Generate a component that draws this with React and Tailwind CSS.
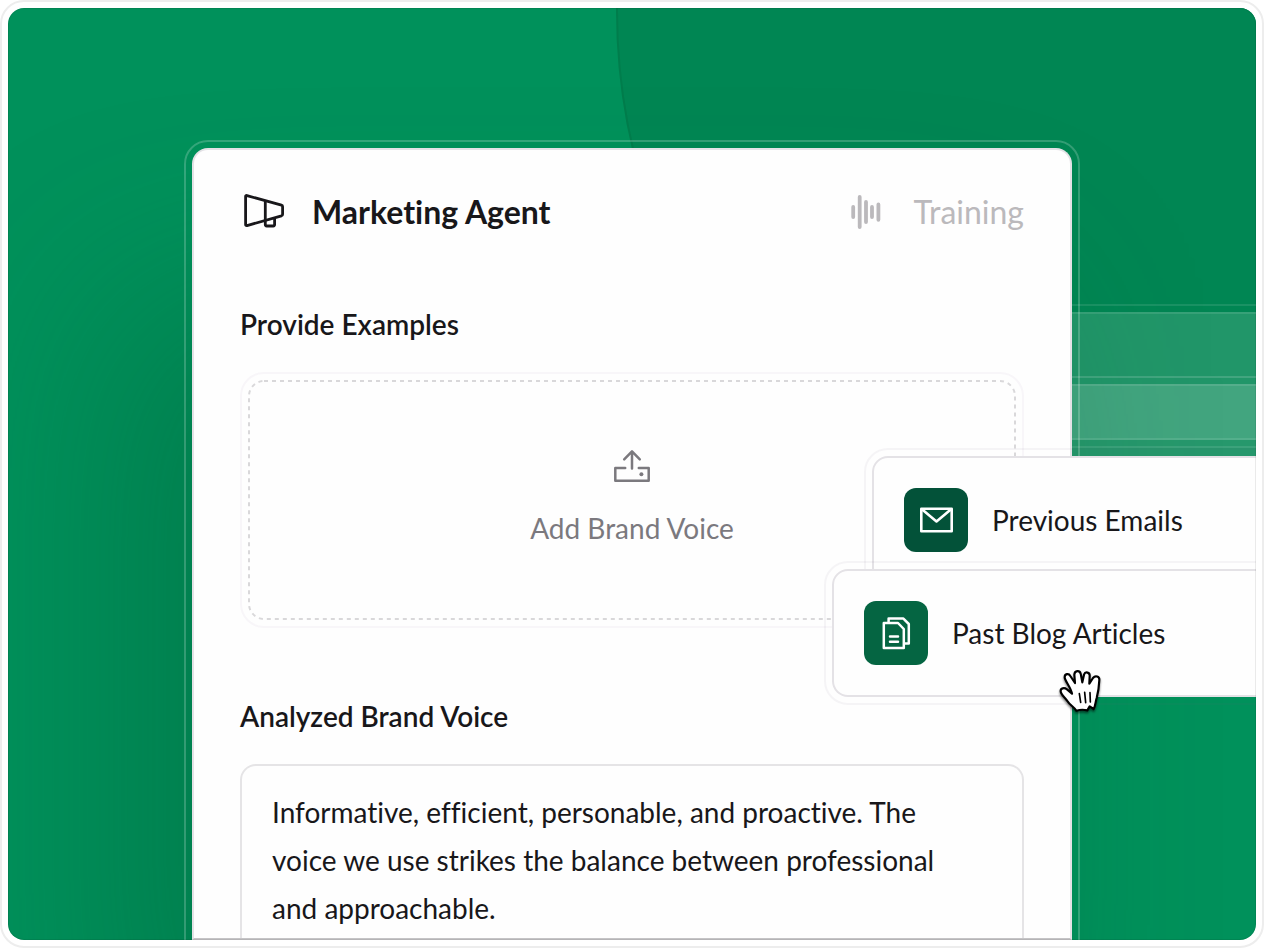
import { useState } from 'react';

const fuentes = [
  { id: 'emails', label: 'Previous Emails', position: 'left-[680px] top-[448px]', color: 'bg-[#035239]', Icon: MailIcon },
  { id: 'articles', label: 'Past Blog Articles', position: 'left-[640px] top-[561px]', color: 'bg-[#056542]', Icon: DocumentsIcon },
];

function MegaphoneIcon() {
  return (
    <svg className="size-12 shrink-0" viewBox="0 0 48 48" fill="none" stroke="currentColor" strokeWidth="2.8" strokeLinejoin="round" aria-hidden="true">
      <path d="M7 7.6 L41.5 17.2 Q42.6 17.5 42.6 18.7 V26.3 Q42.6 27.4 41.5 27.8 L7 37.6 Q5.6 37.9 5.6 36.5 V8.6 Q5.6 7.2 7 7.6 Z" />
      <path d="M25.3 13 V36.6 Q25.3 38 26.7 38 H33.2 Q34.6 38 34.6 36.6 V29.8" />
    </svg>
  );
}

function WaveIcon() {
  return (
    <svg className="h-9 w-8 shrink-0" viewBox="0 0 32 36" stroke="currentColor" strokeWidth="3.8" strokeLinecap="round" aria-hidden="true">
      <path d="M3.2 13 V23 M9.7 3 V33 M16 8 V28 M22 13 V23 M28.4 10.4 V25.8" />
    </svg>
  );
}

function UploadIcon() {
  return (
    <svg className="size-10" viewBox="0 0 40 40" fill="none" stroke="currentColor" strokeWidth="2.5" strokeLinecap="round" strokeLinejoin="round" aria-hidden="true">
      <path d="M13.2 22 H3.3 V34.8 H36.7 V22 H26.8" />
      <path d="M20 22.4 V5.4 M12.2 13.4 L20 5.4 L27.8 13.4" />
      <circle cx="29.4" cy="28.2" r="2" fill="currentColor" stroke="none" />
    </svg>
  );
}

function MailIcon() {
  return (
    <svg className="size-16" viewBox="0 0 64 64" fill="none" stroke="currentColor" strokeWidth="2.6" strokeLinejoin="round" aria-hidden="true">
      <rect x="17.3" y="20.7" width="30.4" height="22.6" />
      <path d="M17.6 21 L32.5 33.4 L47.4 21" />
    </svg>
  );
}

function DocumentsIcon() {
  return (
    <svg className="size-16" viewBox="0 0 64 64" fill="none" stroke="currentColor" strokeWidth="2.5" strokeLinecap="round" strokeLinejoin="round" aria-hidden="true">
      <path d="M19.8 22 H34 L39.8 28 V47 H19.8 Z" />
      <path d="M24.6 21.4 V17.6 H39.4 L44.8 23 V42.4 H41" />
      <path d="M26 35.6 H34 M26 40.8 H34" />
    </svg>
  );
}

function HandCursor() {
  return (
    <svg
      className="pointer-events-none absolute left-[865px] top-[659px] z-30 size-12 drop-shadow-[0_2px_1px_rgba(0,0,0,0.5)]"
      viewBox="50 50 144 144"
      fill="white"
      stroke="black"
      strokeWidth="6.5"
      strokeLinecap="round"
      strokeLinejoin="round"
      aria-hidden="true"
    >
      <path d="M108 181 C102 170 88 164 81 152 C75 142 62 134 61 123 C60 113 72 111 80 117 L95 130 C92 112 74 92 73 81 C73 70 85 68 90 77 L104 98 L102 73 C103 60 118 59 121 70 L126 96 L131 73 C135 62 149 66 148 77 L147 100 L158 83 C165 74 178 78 177 89 C176 110 174 125 169 143 C165 155 166 165 160 176 L148 168 L141 180 C128 177 118 178 108 181 Z" />
      <path d="M117 130 L121 156 M133 126 L136 157 M149 127 L150 155" strokeWidth="5" fill="none" />
    </svg>
  );
}

export default function App() {
  const [voz, setVoz] = useState(
    'Informative, efficient, personable, and proactive. The voice we use strikes the balance between professional and approachable.'
  );

  return (
    <div className="flex min-h-screen flex-col rounded-3xl border-2 border-[#ededed] bg-white p-1.5 font-['Lato','Liberation_Sans',sans-serif] text-[#18171a] [font-variant-ligatures:none]">
      <main className="relative flex flex-1 flex-col overflow-hidden rounded-2xl bg-[#00915b]">
        <div className="relative mx-auto flex w-full max-w-[880px] flex-1 flex-col pt-[140px]">
          {/* Círculo de fondo */}
          <div className="absolute -top-[600px] left-[424px] size-[1206px] rounded-full border-2 border-[#007d4c] bg-[#008653]" />

          {/* Tarjetas que se desvanecen detrás del panel */}
          <div className="absolute left-[760px] top-[304px] h-32 w-screen rounded-2xl bg-white/13 inset-ring-2 inset-ring-white/10 outline-2 outline-offset-6 outline-white/10" />
          <div className="absolute left-[720px] top-[376px] h-32 w-screen rounded-2xl bg-white/15 inset-ring-2 inset-ring-white/10 outline-2 outline-offset-6 outline-white/15" />

          <section className="relative flex flex-1 flex-col rounded-t-2xl border-2 border-[#e4e2e6] border-b-[#c5c4c6] bg-[#fefefe] px-[46px] pt-[38px] shadow-[-70px_160px_200px_0_rgba(0,92,54,0.36)] outline-2 outline-offset-6 outline-white/20">
            <header className="flex items-center justify-between">
              <div className="flex items-center gap-6">
                <MegaphoneIcon />
                <h1 className="text-[32px] leading-12 font-bold">Marketing Agent</h1>
              </div>
              <div className="flex items-center gap-8 text-[#bbb9bc]">
                <WaveIcon />
                <span className="text-[32px] leading-12">Training</span>
              </div>
            </header>

            <h2 id="ejemplos" className="mt-17 text-[28px] leading-10 font-semibold">Provide Examples</h2>
            <button
              type="button"
              aria-describedby="ejemplos"
              className="relative mt-7 flex h-64 flex-col items-center justify-center gap-[22px] rounded-3xl border-2 border-[#f8f6f9] text-[#7b797e]"
            >
              <svg className="absolute inset-1.5 h-[240px] w-[calc(100%-12px)]" fill="none" stroke="#d9d8da" strokeWidth="2" strokeDasharray="4 4" aria-hidden="true">
                <rect x="1" y="1" rx="15" className="h-[calc(100%-2px)] w-[calc(100%-2px)]" />
              </svg>
              <UploadIcon />
              <span className="pb-1.5 text-[28px] leading-10">Add Brand Voice</span>
            </button>

            <label htmlFor="voz" className="mt-17 text-[28px] leading-10 font-semibold">Analyzed Brand Voice</label>
            <textarea
              id="voz"
              value={voz}
              onChange={(e) => setVoz(e.target.value)}
              rows={3}
              className="mt-7 flex-1 resize-none overflow-hidden rounded-t-2xl border-2 border-b-0 border-[#e5e4e6] pt-[22px] pr-14 pl-[30px] text-[28px] leading-12 outline-none"
            />
          </section>

          {fuentes.map(({ id, label, position, color, Icon }) => (
            <button
              key={id}
              type="button"
              className={`absolute z-20 flex h-32 w-screen items-center gap-6 rounded-2xl bg-[#fefefe] px-8 text-left inset-ring-2 inset-ring-[#e4e2e6] outline-2 outline-offset-6 outline-[#70608010] ${position}`}
            >
              <span className={`rounded-xl text-white ${color}`}>
                <Icon />
              </span>
              <span className="text-[28px] leading-10">{label}</span>
            </button>
          ))}

          <HandCursor />
        </div>
        <div className="pointer-events-none absolute inset-0 z-40 rounded-2xl inset-ring-1 inset-ring-black/8" />
      </main>
    </div>
  );
}
